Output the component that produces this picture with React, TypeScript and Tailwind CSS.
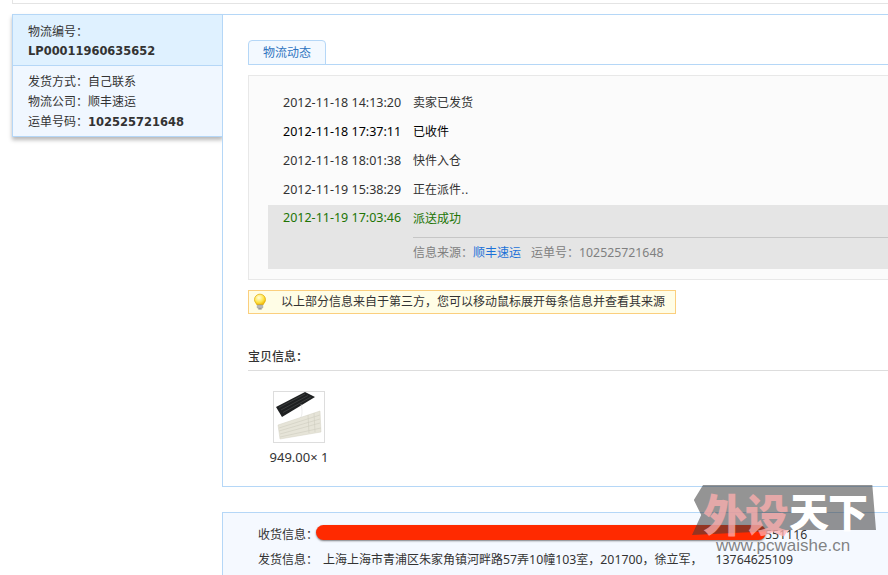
const font = { fontFamily: '"DejaVu Sans", "Noto Sans CJK SC", sans-serif' };
const num = { fontFamily: '"Noto Sans", "Noto Sans CJK SC", sans-serif' };

const rows = [
  { t: "2012-11-18 14:13:20", m: "卖家已发货", c: "text-[#333333]" },
  { t: "2012-11-18 17:37:11", m: "已收件", c: "text-[#000000]" },
  { t: "2012-11-18 18:01:38", m: "快件入仓", c: "text-[#333333]" },
  { t: "2012-11-19 15:38:29", m: "正在派件..", c: "text-[#333333]" },
];

function Bulb() {
  return (
    <svg width="14" height="18" viewBox="0 0 16 20">
      <defs>
        <radialGradient id="b" cx="0.4" cy="0.35" r="0.7">
          <stop offset="0" stopColor="#fffde0" />
          <stop offset="0.6" stopColor="#ffe64d" />
          <stop offset="1" stopColor="#f0b400" />
        </radialGradient>
      </defs>
      <path d="M8 1a6.3 6.3 0 0 0-6.3 6.3c0 2.6 1.8 3.8 2.6 5.7h7.4c.8-1.9 2.6-3.1 2.6-5.7A6.3 6.3 0 0 0 8 1z" fill="url(#b)" stroke="#e0a800" strokeWidth="0.8" />
      <rect x="4.8" y="13.4" width="6.4" height="3.6" rx="0.8" fill="#b9b9b9" stroke="#8f8f8f" strokeWidth="0.5" />
      <rect x="6" y="17" width="4" height="1.6" rx="0.7" fill="#888888" />
    </svg>
  );
}

function Keyboards() {
  return (
    <svg width="50" height="50" viewBox="0 0 50 50">
      <rect width="50" height="50" fill="#ffffff" />
      <path d="M2 15 L31 0 L41 5 L8 25 Z" fill="#1e2021" />
      <path d="M5 15.5 L31 2 M7 18 L34 3.5 M9 20.5 L37 5" stroke="#3d3f40" strokeWidth="0.9" />
      <path d="M27 12 C29 20 28 25 25 28" stroke="#d8d8d8" strokeWidth="0.5" fill="none" />
      <path d="M4 33 L46 19 L47 40 L6 47 Z" fill="#e6e4d8" stroke="#d4d2c4" strokeWidth="0.5" />
      <path d="M5 36 L46 23 M5 39 L46 27 M6 42 L46 31 M6 45 L47 36 M34 23 L35 41 M40 21 L41 40" stroke="#cfcdbf" strokeWidth="0.6" />
    </svg>
  );
}

function N({ children }: { children: string }) {
  return <span style={num} className="text-[12.3px]">{children}</span>;
}

export default function App() {
  return (
    <div style={font} className="relative w-[888px] h-[575px] overflow-hidden bg-white text-[12px] text-[#333333]">
      <div className="ml-3 h-1 border-l border-b border-[#e4e4e4]" />
      <div className="mt-[10px] flex items-start">
        <div className="w-[211px] shrink-0 ml-3 border border-r-0 border-[#b5d7f7] bg-[#f0f7ff] shadow-[0_3px_4px_rgba(0,0,0,0.28)] h-[123px]">
          <div className="h-[51px] bg-[#dff1ff] border-b border-[#b5d7f7] pl-[15px] pt-[7px] leading-[20px]">
            <div>物流编号：</div>
            <div className="-mt-px font-bold text-[11.45px]">LP00011960635652</div>
          </div>
          <div className="pl-[15px] pt-[6px] leading-[20px]">
            <div>发货方式：自己联系</div>
            <div>物流公司：顺丰速运</div>
            <div>运单号码：<span className="font-bold text-[11.5px]">102525721648</span></div>
          </div>
        </div>
        <div className="relative z-10 w-[680px] shrink-0 -ml-px h-[473px] border border-r-0 border-[#b5d7f7] bg-white pl-[25px] pt-[25px]">
          <div className="flex h-[25px] items-end border-b border-[#b5d7f7]">
            <div className="w-[78px] h-[25px] -mb-px rounded-t-[4px] border border-[#b5d7f7] bg-[#f3f9ff] text-[#2f74c0] text-center leading-[24px]">物流动态</div>
          </div>
          <div className="mt-[10px] h-[205px] border border-[#e8e8e8] bg-[#fbfbfb] pl-[19px] pt-[12px]">
            {rows.map((r) => (
              <div key={r.t} className={`flex h-[29px] items-center pl-[15px] ${r.c}`}>
                <span style={num} className="w-[130px] shrink-0 pt-[2px] text-[12.5px]">{r.t}</span>
                <span>{r.m}</span>
              </div>
            ))}
            <div className="mt-px h-[64px] bg-[#e5e5e5] pl-[15px]">
              <div className="flex h-[27px] items-center text-[#217404]">
                <span style={num} className="w-[130px] shrink-0 text-[12.5px]">2012-11-19 17:03:46</span>
                <span>派送成功</span>
              </div>
              <div className="ml-[130px] mt-[5px] border-t border-[#c6c6c6] pt-[4px] leading-[21px] text-[#808080]">
                信息来源：<span className="text-[#1d72d8]">顺丰速运</span>
                <span className="ml-[10px]">运单号：<N>102525721648</N></span>
              </div>
            </div>
          </div>
          <div className="mt-[10px] flex h-[24px] w-[428px] items-center border border-[#fbcf7e] bg-[#fffde6] pl-[4px]">
            <Bulb />
            <span className="ml-[14px]">以上部分信息来自于第三方，您可以移动鼠标展开每条信息并查看其来源</span>
          </div>
          <div className="mt-[27px] h-[30px] border-b border-[#dddddd] font-medium leading-[18px] pt-[7px]">宝贝信息：</div>
          <div className="w-[102px] mt-[20px] flex flex-col items-center">
            <div className="border border-[#dddddd] w-[52px] h-[52px]">
              <Keyboards />
            </div>
            <div style={num} className="mt-[4px] leading-[20px] text-[13px]">949.00× 1</div>
          </div>
        </div>
      </div>
      <div className="relative z-10 mt-[25px] ml-[222px] h-[70px] border-l border-t border-[#b5d7f7] bg-[#f5f9ff] pl-[35px] pt-[12px] leading-[20px]">
        <div className="flex h-[25px]">
          <span>收货信息：</span>
          <span className="ml-[447px]"><N>551116</N></span>
        </div>
        <div className="flex">
          <span className="w-[65px] shrink-0">发货信息：</span>
          <span>上海上海市青浦区朱家角镇河畔路<N>57</N>弄<N>10</N>幢<N>103</N>室，<N>201700</N>，徐立军，</span>
          <span className="ml-[13px]"><N>13764625109</N></span>
        </div>
      </div>
      <div className="absolute z-20 left-[316px] top-[525px] h-[15px] w-[450px] rounded-full bg-[#ff2a00] shadow-[0_1px_2px_rgba(0,0,0,0.5)]" />
      <div className="absolute z-30 left-[692px] top-[485px] w-[184px] h-[50px] bg-[rgba(60,60,60,0.55)] [clip-path:polygon(6%_0,98%_0,100%_90%,55%_90%,0_100%,5%_60%,1%_30%)]" />
      <div className="absolute z-30 left-[703px] top-[484px] flex items-start font-black whitespace-nowrap" style={{ fontFamily: '"Noto Sans CJK SC", sans-serif' }}>
        <span className="mt-[4px] w-[86px] text-[44px] leading-[50px] tracking-[-2px] text-[rgba(255,175,175,0.75)]">外设</span>
        <span className="mt-px text-[40px] leading-[50px] tracking-[-1px] text-white">天下</span>
      </div>
      <div className="absolute z-30 left-[716px] top-[535px] text-[17px] leading-[22px] text-[rgba(90,90,90,0.75)] whitespace-nowrap" style={{ fontFamily: '"Liberation Sans", sans-serif' }}>www.pcwaishe.cn</div>
    </div>
  );
}
